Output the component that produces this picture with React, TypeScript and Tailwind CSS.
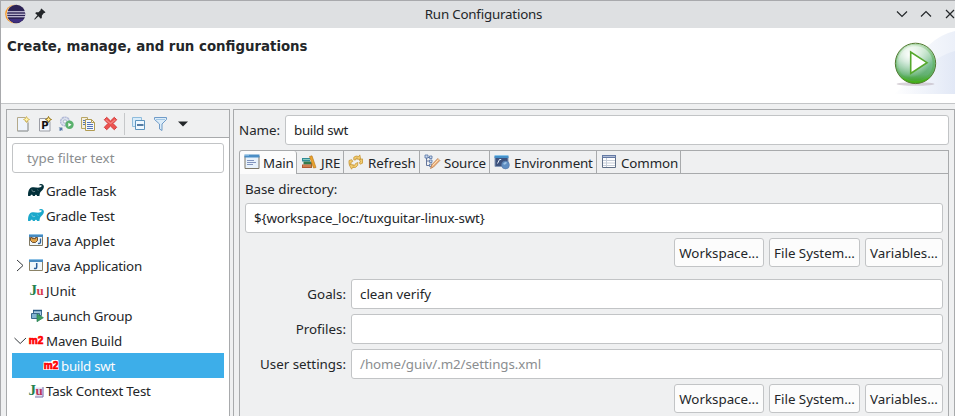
import type { ReactNode } from "react";

function Svg({ w = 16, h = 16, children, className = "" }: { w?: number; h?: number; children: ReactNode; className?: string }) {
  return (
    <svg width={w} height={h} viewBox={`0 0 ${w} ${h}`} className={`block shrink-0 overflow-visible ${className}`} fill="none">
      {children}
    </svg>
  );
}

function EclipseLogo() {
  return (
    <Svg w={22} h={20} className="ml-[4px]">
      <circle cx="9.5" cy="10" r="9.3" fill="#f7941e" />
      <circle cx="10.6" cy="10" r="9.2" fill="#f8e3c4" />
      <circle cx="11.2" cy="10" r="9.2" fill="#2c2255" />
      <path d="M4 15h14.5a9 9 0 0 1-14.5 0z" fill="#3f2f80" />
      <path d="M2 7.7h18.5M2 10.2h18.5M2 12.7h18.5" stroke="#e4e0f2" strokeWidth="1.1" />
    </Svg>
  );
}

function Pin() {
  return (
    <Svg w={12} h={12} className="ml-[7px]">
      <path d="M7.4.5 11.5 4.2 10.6 5 9.9 4.9 7.9 7.4 7.8 10 6.8 10.7 4.4 8.2 1 11.4.2 11.6.5 10.8 3.4 7.2 1.2 5.3 2.1 4.3 4.5 4.2 6.8 2.1 6.6 1.3z" fill="#232629" />
    </Svg>
  );
}

function RunBanner() {
  return (
    <svg width="62" height="66" viewBox="0 0 62 66" className="block" fill="none">
      <defs>
        <linearGradient id="swoop" x1="0" y1="0" x2="1" y2="0">
          <stop offset="0" stopColor="#fff" />
          <stop offset="1" stopColor="#dfe6f5" />
        </linearGradient>
        <linearGradient id="ball" x1="0" y1="0" x2="0" y2="1">
          <stop offset="0" stopColor="#d5edd5" />
          <stop offset=".5" stopColor="#78be90" />
          <stop offset=".78" stopColor="#62b070" />
          <stop offset="1" stopColor="#37a30d" />
        </linearGradient>
        <radialGradient id="gloss" cx=".36" cy=".27" r=".6">
          <stop offset="0" stopColor="#fff" />
          <stop offset=".4" stopColor="#fff" stopOpacity=".65" />
          <stop offset="1" stopColor="#fff" stopOpacity="0" />
        </radialGradient>
      </defs>
      <path d="M0 66C14 60 20 34 36 17Q48 6 62 3V66z" fill="url(#swoop)" opacity=".6" />
      <path d="M0 66C22 56 34 30 62 23V66z" fill="url(#swoop)" opacity=".8" />
      <ellipse cx="22.5" cy="56" rx="19" ry="1.8" fill="#b9aeb9" opacity=".55" />
      <circle cx="22.500" cy="35.400" r="20.200" fill="url(#ball)" stroke="#557a32" strokeWidth="1" />
      <circle cx="22.500" cy="35.400" r="18.300" stroke="#55ad4e" strokeWidth="2.200" opacity=".5" />
      <circle cx="22.500" cy="35.400" r="19" fill="url(#gloss)" />
      <path d="M7 48.300q15.500 10 31 0-5 6.300-15.500 6.300T7 48.300z" fill="#46b50d" opacity=".7" />
      <path d="M17.700 24v21.500L34 34.700z" fill="#fff" stroke="#55a82c" strokeWidth="1.600" />
    </svg>
  );
}

function Spark({ x, y, s = "#b99a35", f = "#fff3a8" }: { x: number; y: number; s?: string; f?: string }) {
  return <path transform={`translate(${x} ${y})`} d="M3 0 4 2 6 3 4 4 3 6 2 4 0 3 2 2z" fill={f} stroke={s} strokeWidth=".9" />;
}

function NewIcon() {
  return (
    <Svg>
      <path d="M1.500 1.500h8v4h2.500v9.500H1.500z" fill="#eef4fc" stroke="#b4a98a" />
      <path d="M12 7v8H1.500" stroke="#9aa5b5" />
      <Spark x={7.500} y={0.500} s="#d0b659" />
    </Svg>
  );
}
function PrototypeIcon() {
  return (
    <Svg>
      <path d="M1.500 2.500h8v3h2.500v9.500H1.500z" fill="#f4f7fb" stroke="#9b9da5" />
      <text x="3.200" y="13" className="font-['DejaVu_Sans'] text-[10px] font-bold" fill="#111">P</text>
      <Spark x={7.500} y={0.500} s="#8b6a08" f="#ffe48a" />
    </Svg>
  );
}
function ExportIcon() {
  return (
    <Svg className="-ml-[2px]">
      <circle cx="7" cy="5.500" r="4.400" fill="#dce1ee" stroke="#b1b9d6" strokeDasharray="2.300 .5" strokeWidth="1.400" />
      <circle cx="7" cy="5.500" r="1.700" fill="#f7f8fc" stroke="#aab7c8" />
      <path d="M.6 11.500h3.800v3.500L3.300 14 2.200 15 1 14l1-1z" fill="#5579a8" />
      <circle cx="11.500" cy="8.800" r="4.200" fill="#5ab16d" />
      <path d="M10.300 6.800 13.500 8.800 10.300 10.800z" fill="#fff" />
    </Svg>
  );
}
function CopyIcon() {
  return (
    <Svg>
      <path d="M1.500 1.500h6v11h-6z" fill="#f3eedf" stroke="#b9a766" />
      <path d="M5.500 3.500h6l3 3v8h-9z" fill="#f5f8fd" stroke="#b29c52" />
      <path d="M11.500 3.500v3h3" stroke="#b29c52" />
      <path d="M3 4.500h2M3 6.500h2M3 8.500h2M7 6.500h4M7 8.500h6M7 10.500h6M7 12.500h6" stroke="#5375b7" />
    </Svg>
  );
}
function DeleteIcon() {
  return (
    <Svg className="ml-px">
      <path d="M1.300 3.700 3.700 1.300 7.500 5 11.300 1.300 13.700 3.700 10 7.500 13.700 11.300 11.300 13.700 7.500 10 3.700 13.700 1.300 11.300 5 7.500z" fill="#ec5350" stroke="#d33b3b" strokeLinejoin="round" />
      <path d="M2.700 3.700 7.500 7.500 12.300 3.700" stroke="#f28580" strokeWidth="1.200" />
    </Svg>
  );
}
function CollapseIcon() {
  return (
    <Svg>
      <path d="M.5 1.500h9v9h-9z" fill="#d8ecfa" stroke="#8fbcdc" />
      <path d="M3.500 4.500h9v9h-9z" fill="#eff8ff" stroke="#5c93bd" />
      <path d="M5 9h6.500" stroke="#14487d" strokeWidth="1.400" />
    </Svg>
  );
}
function FilterIcon() {
  return (
    <Svg>
      <path d="M1.500 1.500h12v2l-4.500 4.500v6.500L6.500 13V8L1.500 3.500z" fill="#dcecf8" stroke="#6f9bc8" />
      <path d="M3 3.500h9" stroke="#a3c7e5" />
    </Svg>
  );
}

function Elephant({ color }: { color: string }) {
  return (
    <Svg w={16} h={14}>
      <path d="M.1 12C-.1 8.500.5 5 3.300 3.600 5.800 2.500 8.600 3.900 11 3.600c2-.2 3.200-1.500 2.500-2.100-.6-.4-1.200.2-1.900 0-.7-.6-.2-1.400 1.100-1.500 2-.2 3.500 1.200 3.200 3.100-.3 2.200-1.900 3.300-3.200 4.700-1.100 1.200-.9 2.400-1.300 4.200H9.100c-.3-1.600-2-1.600-2.300 0H4.900c-.3-1.600-2.200-1.600-2.500 0z" fill={color} />
      <path d="M3.800 5.500c0 2 1.800 2.700 3.300 1.800M9.400 5.800l1 .6" stroke="#fff" strokeWidth=".6" opacity=".65" />
    </Svg>
  );
}
function JavaWindow({ applet = false }: { applet?: boolean }) {
  return (
    <Svg w={14} h={14} className="ml-px">
      <path d="M.5 1.500h13v10H.5z" fill="#eff7fb" stroke={applet ? "#7f7863" : "#8b8266"} />
      <path d="M0 0h14v3H0z" fill="#478ac0" />
      <path d="M0 .5h14" stroke="#8ec1e5" />
      {applet ? (
        <>
          <path d="M1.500 3.500h1.800v1.200h1V4h1v.700h1.200V3.500h2v3L6.500 8.500H3.500L1.500 6.500z" fill="#e2a54a" stroke="#533418" strokeWidth=".8" />
          <path d="M11.500 4.500V8c0 1.500-1.200 1.700-2.500 1.300" stroke="#2e619c" strokeWidth="1.300" />
        </>
      ) : (
        <path d="M7.700 4v4c0 1.700-1.300 1.700-2.700 1.300" stroke="#285c99" strokeWidth="1.500" />
      )}
    </Svg>
  );
}
function JUnitIcon({ task = false }: { task?: boolean }) {
  return (
    <Svg w={16} h={16} className={task ? "" : "ml-px"}>
      {task && (
        <>
          <path d="M7.500 4.500h8v9h-8z" fill="#dedff0" />
          <path d="M15 4v10H7" stroke="#7770aa" />
        </>
      )}
      <text x="0.500" y="11.500" className="font-['Liberation_Serif'] text-[15px] font-bold" fill="#25814d">J</text>
      <text x="7.500" y="11.500" className="font-['Liberation_Serif'] text-[13px] font-bold" fill={task ? "#bb3457" : "#d83e51"}>u</text>
    </Svg>
  );
}
function LaunchGroupIcon() {
  return (
    <Svg w={14} h={14} className="ml-[2px]">
      <path d="M3.500 1.500h8v5h-8z" fill="#a8cce4" stroke="#416d91" />
      <path d="M3 1.500h9" stroke="#285b86" strokeWidth="1.500" />
      <path d="M1.500 4.500h8v5h-8z" fill="#83b2d1" stroke="#38688f" />
      <path d="M7 5v7.700L13.400 8.700z" fill="#3a9d62" stroke="#287b50" strokeWidth=".7" />
    </Svg>
  );
}
function M2Icon({ halo = false }: { halo?: boolean }) {
  return (
    <Svg w={16} h={12}>
      {halo && <path d="M1.500 2.500h7L9.500 1h5v6.500L15 9H1z" fill="#fff" stroke="#fff" strokeWidth="2" strokeLinejoin="round" />}
      <text x="0.800" y="9" className="font-['Liberation_Sans'] text-[10px] font-bold" fill="#f00" stroke="#f00" strokeWidth=".7">m2</text>
    </Svg>
  );
}

function MainIcon() {
  return (
    <Svg>
      <path d="M1 2h14v12.500H1z" fill="#e8f2fb" stroke="#7c7768" />
      <path d="M.5.500h15v3H.5z" fill="#4b8ec6" />
      <path d="M1 1h4" stroke="#b0d6ef" />
      <path d="M3 6.500h7M3 8.500h9M3 10.500h6" stroke="#8294be" />
    </Svg>
  );
}
function BooksIcon() {
  return (
    <Svg>
      <path d="M1 4h8v3.500H1z" fill="#318c96" /><path d="M2 5.500h7" stroke="#87c8bc" />
      <path d="M2.500 7.500H10v3H2.500z" fill="#357c4c" />
      <path d="M1 10.500h9V14H1z" fill="#b25832" /><path d="M2 12h8" stroke="#eaa66d" />
      <path d="M8.500 2.500 11 1.800 15 13.500 12.500 14z" fill="#e9a52c" stroke="#b56d14" strokeWidth=".6" />
      <path d="M10.500 8.500V14" stroke="#9b682d" />
    </Svg>
  );
}
function RefreshIcon() {
  return (
    <Svg>
      <path d="M5.800 5.800V3.300q2-2.100 5-.8l1-1.600.9 4.400-4.200-.2.900-1.200Q8 3.200 7.500 6zM9.700 8.500v2.800q-1.300 3-5.300 2.200l-.8 1.700-2.500-4.600 4.500.2-.8 1.200q2.200.2 2.600-2.300zM11 5.500l3.500-.6v4.300l-2.300 1-1-1.800 1.500-.6zM1 6.500l2.800-.8 1 1.800-1.800.8v2L1 9.800z" fill="#f4ce71" stroke="#c79635" strokeWidth=".8" />
    </Svg>
  );
}
function SourceIcon() {
  return (
    <Svg>
      <path d="M2.500 3.500v8h4M2.500 3.500h3M2.500 7h4" stroke="#64769d" />
      <path d="M1 1h3v3H1zM5.500 2h2.500v2.500h-2.500zM5.500 6h2.500v2.500h-2.500zM5.500 10h2.500v2.500H5.500z" fill="#c8d8ef" stroke="#5673a4" strokeWidth=".8" />
      <path d="M6.500 14.500l1.300-3.700 6-6.300 2 2-6.300 6.500z" fill="#efb47f" stroke="#b77b4f" strokeWidth=".8" />
      <path d="m8.500 11.500 6-6" stroke="#ffe1b5" />
    </Svg>
  );
}
function EnvironmentIcon() {
  return (
    <Svg>
      <path d="M1 2.500h13v10H1z" fill="#3d527d" stroke="#8498b6" />
      <path d="M.5 1.500h14v2.500H.5z" fill="#4490c9" /><path d="M1 1.500h13" stroke="#8ac4ea" />
      <path d="m3.500 9.500 2-4M5.500 5.500h1.700" stroke="#e6eff9" />
      <circle cx="11.500" cy="11" r="3.900" fill="#5f8ec2" stroke="#5579aa" strokeWidth=".6" />
      <path d="M9 10q2-3 4-1.500l-1 1.500-1.500.8z" fill="#9dc2e4" />
    </Svg>
  );
}
function CommonIcon() {
  return (
    <Svg>
      <path d="M1.500 1.500h13v12h-13z" fill="#fff" stroke="#607087" />
      <path d="M1 1h14v3H1z" fill="#657aa4" /><path d="M2 2.500h12" stroke="#b2bfd7" />
      <path d="M5.500 4v9M2 6.500h12M2 9h12M2 11.500h12" stroke="#c5cdd8" />
    </Svg>
  );
}

type Item = { label: string; icon: ReactNode; arrow?: "right" | "down"; selected?: boolean; tracking?: string };
const items: Item[] = [
  { label: "Gradle Task", icon: <Elephant color="#02303a" />, tracking: "tracking-[-0.2px]" },
  { label: "Gradle Test", icon: <Elephant color="#1ba8cb" />, tracking: "tracking-[-0.14px]" },
  { label: "Java Applet", icon: <JavaWindow applet />, tracking: "tracking-[-0.08px]" },
  { label: "Java Application", icon: <JavaWindow />, arrow: "right", tracking: "tracking-[-0.19px]" },
  { label: "JUnit", icon: <JUnitIcon /> },
  { label: "Launch Group", icon: <LaunchGroupIcon />, tracking: "tracking-[-0.18px]" },
  { label: "Maven Build", icon: <M2Icon />, arrow: "down", tracking: "tracking-[-0.14px]" },
  { label: "build swt", icon: <M2Icon halo />, selected: true, tracking: "tracking-[-0.3px]" },
  { label: "Task Context Test", icon: <JUnitIcon task />, tracking: "tracking-[-0.2px]" },
];

function TreeRow({ label, icon, arrow, selected, tracking = "" }: Item) {
  return (
    <div className={`flex h-[25px] items-center ${selected ? "bg-[#3daee9] pl-[31px] text-[#fcfcfc]" : "pl-px"}`}>
      {!selected && (
        <span className="flex w-[15px] shrink-0 justify-center">
          {arrow === "right" && <Svg w={15} h={15}><path d="M4 2 10 7.500 4 13" stroke="#353a3e" /></Svg>}
          {arrow === "down" && <Svg w={15} h={15}><path d="M1.500 5 7.200 10.500 13 5" stroke="#353a3e" /></Svg>}
        </span>
      )}
      <span className="flex w-[18px] shrink-0 pt-px">{icon}</span>
      <span className={`whitespace-nowrap ${tracking}`}>{label}</span>
    </div>
  );
}

function Field({ className = "", children }: { className?: string; children?: ReactNode }) {
  return <div className={`flex h-[30px] items-center rounded-[3px] border border-[#c2c4c6] bg-white px-2 ${className}`}>{children}</div>;
}

function ButtonRow() {
  return (
    <div className="flex justify-end gap-[5px]">
      <button className="h-[29px] w-[90px] rounded-[3px] border border-[#c2c4c6] bg-[#fcfcfc] pt-px whitespace-nowrap">Workspace...</button>
      <button className="h-[29px] w-[91px] rounded-[3px] border border-[#c2c4c6] bg-[#fcfcfc] pt-px whitespace-nowrap">File System...</button>
      <button className="h-[29px] w-[78px] rounded-[3px] border border-[#c2c4c6] bg-[#fcfcfc] pt-px whitespace-nowrap">Variables...</button>
    </div>
  );
}

const tabs = [
  { label: "Main", icon: <MainIcon />, cls: "w-[57px] rounded-t-[3px] bg-[#fcfcfc] pb-px pl-[4px] gap-[3px] tracking-[-0.2px]" },
  { label: "JRE", icon: <BooksIcon />, cls: "w-[47px] border-b border-b-[#a8aaac] pl-[4px] gap-[4px]" },
  { label: "Refresh", icon: <RefreshIcon />, cls: "w-[76px] border-b border-b-[#a8aaac] pl-[4px] gap-[4px]" },
  { label: "Source", icon: <SourceIcon />, cls: "w-[70px] border-b border-b-[#a8aaac] pl-[4px] gap-[4px] tracking-[-0.15px]" },
  { label: "Environment", icon: <EnvironmentIcon />, cls: "w-[107px] border-b border-b-[#a8aaac] pl-[4px] gap-[4px] tracking-[-0.15px]" },
  { label: "Common", icon: <CommonIcon />, cls: "w-[84px] border-b border-b-[#a8aaac] pl-[4px] gap-[4px] tracking-[-0.1px]" },
];

export default function App() {
  return (
    <div className="flex h-[416px] w-[955px] flex-col overflow-hidden border-t border-l border-[#a8a9ac] bg-[#eff0f1] font-['Noto_Sans',sans-serif] text-[13.33px] leading-[18px] text-[#232629]">
      <header className="flex h-[27px] shrink-0 items-center bg-[#dee0e2] pb-px">
        <div className="flex w-[70px] items-center"><EclipseLogo /><Pin /></div>
        <div className="flex-1 text-center tracking-[-0.2px]">Run Configurations</div>
        <div className="flex w-[59px] justify-between">
          <Svg w={12} h={12}><path d="M1 3.500 6 8.500 11 3.500" stroke="#232629" strokeWidth="1.200" /></Svg>
          <Svg w={12} h={12}><path d="M1 8.500 6 3.500 11 8.500" stroke="#232629" strokeWidth="1.200" /></Svg>
          <Svg w={11} h={12}><path d="m2 2 8 8M10 2l-8 8" stroke="#232629" strokeWidth="1.200" /></Svg>
        </div>
      </header>
      <section className="flex h-[76px] shrink-0 justify-between border-b border-[#c3c5c7] bg-white">
        <h1 className="pt-[10px] pl-[6px] font-['DejaVu_Sans',sans-serif] text-[13.33px] font-bold">Create, manage, and run configurations</h1>
        <RunBanner />
      </section>

      <main className="flex min-h-0 flex-1 gap-[3px] pt-[5px] pl-[5px]">
        <aside className="flex w-[224px] shrink-0 flex-col border border-b-0 border-[#a8aaac] bg-white">
          <div className="flex h-[28px] shrink-0 items-center border-b border-[#a8aaac] bg-[#eff0f1] pl-[9px]">
            <div className="flex gap-[6px]"><NewIcon /><PrototypeIcon /><ExportIcon /><CopyIcon /><DeleteIcon /></div>
            <div className="mr-[7px] ml-[5px] h-[22px] w-px bg-[#c6c8ca]" />
            <div className="flex items-center gap-[5px]">
              <CollapseIcon /><FilterIcon />
              <Svg w={12} h={8} className="ml-[3px]"><path d="M1 1.500h10L6 6.500z" fill="#232629" /></Svg>
            </div>
          </div>
          <div className="px-[5px] pt-[5px]">
            <Field className="pl-[14px] text-[#8b8e90]">type filter text</Field>
            <div className="pt-[5px]">{items.map((item) => <TreeRow key={item.label} {...item} />)}</div>
          </div>
        </aside>

        <section className="flex w-[722px] shrink-0 flex-col border border-b-0 border-[#a8aaac] pt-[5px] pr-[5px] pl-[5px]">
          <div className="flex items-center"><span className="w-[46px]">Name:</span><Field className="flex-1 tracking-[-0.3px]">build swt</Field></div>
          <div className="mt-[5px] flex min-h-0 w-[710px] flex-1 flex-col rounded-tl-[3px] border border-b-0 border-[#a8aaac]">
            <div className="flex h-[23px] shrink-0">
              {tabs.map((tab) => (
                <div key={tab.label} className={`flex shrink-0 items-center border-r border-r-[#a8aaac] whitespace-nowrap ${tab.cls}`}>
                  {tab.icon}<span className="pt-[2px]">{tab.label}</span>
                </div>
              ))}
              <div className="flex-1 border-b border-[#a8aaac]" />
            </div>
            <div className="px-[5px] pt-[6px]">
              <div className="h-[23px] tracking-[-0.05px]">Base directory:</div>
              <Field className="tracking-[-0.135px]">{"${workspace_loc:/tuxguitar-linux-swt}"}</Field>
              <div className="pt-[5px]"><ButtonRow /></div>
              <div className="grid grid-cols-[101px_1fr] items-center gap-x-[5px] gap-y-[5px] pt-[12px] pb-[5px]">
                <span className="text-right">Goals:</span><Field>clean verify</Field>
                <span className="text-right">Profiles:</span><Field />
                <span className="text-right">User settings:</span><Field className="tracking-[-0.06px] text-[#8b8e90]">/home/guiv/.m2/settings.xml</Field>
              </div>
              <ButtonRow />
            </div>
          </div>
        </section>
      </main>
    </div>
  );
}
